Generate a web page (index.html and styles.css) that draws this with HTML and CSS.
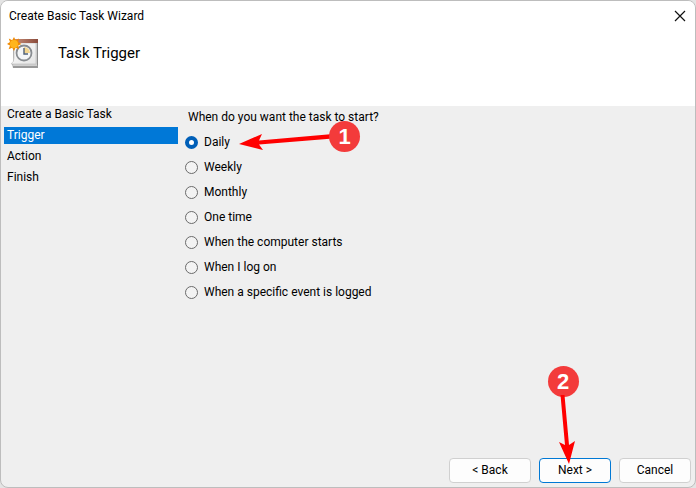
FILE: index.html
```html
<!DOCTYPE html>
<html lang="en">
<head>
    <meta charset="UTF-8">
    <meta name="viewport" content="width=device-width, initial-scale=1.0">
    <title>Create Basic Task Wizard</title>
    <link rel="stylesheet" href="styles.css">
</head>
<body>
    <form class="wizard">
        <header class="header">
            <div class="titlebar">
                <span>Create Basic Task Wizard</span>
                <button type="button" class="close-btn" aria-label="Close">
                    <svg width="12" height="12" viewBox="0 0 12 12"><path d="M1 1L11 11M11 1L1 11" stroke="#111" stroke-width="1.2" fill="none"/></svg>
                </button>
            </div>
            <div class="page-title">
                <svg width="32" height="32" viewBox="0 0 32 32">
                    <defs>
                        <linearGradient id="page" x1="0" y1="0" x2="1" y2="1">
                            <stop offset="0" stop-color="#ffffff"/>
                            <stop offset="1" stop-color="#e4e4e4"/>
                        </linearGradient>
                        <linearGradient id="bar" x1="0" y1="0" x2="1" y2="0">
                            <stop offset="0" stop-color="#c98f78"/>
                            <stop offset="1" stop-color="#8a4b3c"/>
                        </linearGradient>
                    </defs>
                    <path d="M6 4H31V31H6Z" fill="#8b8b8b"/>
                    <path d="M5 26L31 28V31H6Z" fill="#999"/>
                    <path d="M7 3H30V29H6Z" fill="#d0d0d0"/>
                    <path d="M7 6H29V27H4Q7 25 7 21Z" fill="url(#page)" stroke="#bbb" stroke-width="0.6"/>
                    <path d="M7 2H31V6H7Z" fill="url(#bar)"/>
                    <circle cx="17" cy="16" r="7.5" fill="#f4f6f8" stroke="#888c90" stroke-width="1.8"/>
                    <path d="M17 16V10A6 6 0 0 1 23 16Z" fill="#f3d58e"/>
                    <path d="M17 11V17H21" fill="none" stroke="#4e6075" stroke-width="1.4"/>
                    <path d="M7 0L8.6 3.2L12 1.5L11.2 5L14.5 7L11.2 8.6L12 12.3L8.6 10.8L7 14L5.2 10.8L1.6 12.3L3 8.6L0 7L3 5L1.8 1.5L5.2 3.2Z" fill="#f08a00"/>
                    <circle cx="7" cy="7" r="4" fill="#ffb51c"/>
                </svg>
                <h1>Task Trigger</h1>
            </div>
        </header>

        <div class="main">
            <ul class="steps">
                <li>Create a Basic Task</li>
                <li class="active">Trigger</li>
                <li>Action</li>
                <li>Finish</li>
            </ul>

            <fieldset class="options">
                <legend>When do you want the task to start?</legend>
                <div class="option">
                    <input type="radio" name="start" id="daily" checked>
                    <label for="daily">Daily</label>
                    <div class="callout callout-one">
                        <svg width="94" height="32" viewBox="0 0 94 32"><path d="M0 24L23 14L20 20.5L94 14V18.500L20 24.500L24 30Z" fill="#f00"/></svg>
                        <span class="badge">1</span>
                    </div>
                </div>
                <div class="option">
                    <input type="radio" name="start" id="weekly">
                    <label for="weekly">Weekly</label>
                </div>
                <div class="option">
                    <input type="radio" name="start" id="monthly">
                    <label for="monthly">Monthly</label>
                </div>
                <div class="option">
                    <input type="radio" name="start" id="once">
                    <label for="once">One time</label>
                </div>
                <div class="option">
                    <input type="radio" name="start" id="boot">
                    <label for="boot">When the computer starts</label>
                </div>
                <div class="option">
                    <input type="radio" name="start" id="logon">
                    <label for="logon">When I log on</label>
                </div>
                <div class="option">
                    <input type="radio" name="start" id="event">
                    <label for="event">When a specific event is logged</label>
                </div>
            </fieldset>
        </div>

        <footer class="footer">
            <button type="button" class="btn btn-back">&lt; Back</button>
            <div class="next">
                <button type="button" class="btn btn-primary">Next &gt;</button>
                <div class="callout callout-two">
                    <span class="badge">2</span>
                    <svg width="32" height="70" viewBox="0 0 32 70"><path d="M13.500 0H17.500L22 50L28 46L22 69L12 47L18 50Z" fill="#f00"/></svg>
                </div>
            </div>
            <button type="button" class="btn">Cancel</button>
        </footer>
    </form>
</body>
</html>
```

FILE: styles.css
```css
* {
    box-sizing: border-box;
}

body {
    margin: 0;
    font-family: Roboto, 'Open Sans', sans-serif;
    font-size: 12px;
    line-height: 17px;
    color: #000;
    background-color: #e4e4e4;
}

.wizard {
    display: flex;
    flex-direction: column;
    min-height: 100vh;
    background-color: #efefef;
    border: 1px solid #bdbdbd;
    border-radius: 8px;
    overflow: hidden;
}

.header {
    height: 105px;
    background-color: #fff;
}

.titlebar {
    display: flex;
    align-items: center;
    justify-content: space-between;
    height: 30px;
    padding: 0 9px 0 8px;
}

.close-btn {
    display: flex;
    padding: 0;
    border: none;
    background: none;
}

.page-title {
    display: flex;
    align-items: center;
    gap: 19px;
    padding: 6px;
}

.page-title h1 {
    margin: 0;
    font-size: 15px;
    font-weight: 400;
    line-height: 18px;
}

.main {
    display: flex;
    flex: 1;
}

.steps {
    display: flex;
    flex-direction: column;
    gap: 4px;
    width: 177px;
    margin: 0;
    padding: 0 0 0 3px;
    list-style: none;
}

.steps li {
    padding-left: 3px;
}

.steps .active {
    color: #fff;
    background-color: #0078d7;
}

.options {
    margin: 0;
    padding: 3px 7px;
    border: none;
}

.options legend {
    float: left;
    width: 100%;
    margin-bottom: 4px;
    padding: 0 3px;
}

.option {
    display: flex;
    align-items: center;
    gap: 6px;
    clear: both;
    position: relative;
    height: 25px;
}

.option input {
    appearance: none;
    width: 13px;
    height: 13px;
    margin: 0;
    border: 1px solid #6b6b6b;
    border-radius: 50%;
    background-color: #f3f3f3;
}

.option input:checked {
    border: 4px solid #005fb8;
    background-color: #fff;
}

.callout {
    display: flex;
    position: absolute;
    pointer-events: none;
}

.callout-one {
    top: -10px;
    left: 54px;
    align-items: center;
}

.callout-two {
    flex-direction: column;
    align-items: center;
    bottom: 18px;
    left: 8px;
}

.badge {
    width: 31px;
    height: 31px;
    border-radius: 50%;
    background-color: #f33b3b;
    color: #fff;
    font-family: 'Liberation Sans', sans-serif;
    font-size: 22px;
    font-weight: 700;
    line-height: 31px;
    text-align: center;
}

.callout-one .badge {
    margin-left: -4px;
}

.callout-two svg {
    margin-top: -2px;
}

.footer {
    display: flex;
    justify-content: flex-end;
    gap: 8px;
    padding: 4px;
}

.next {
    position: relative;
}

.btn {
    width: 72px;
    height: 25px;
    padding: 0;
    border: 1px solid #d0d0d0;
    border-radius: 4px;
    background-color: #fdfdfd;
    color: #000;
    font: inherit;
}

.btn-back {
    width: 82px;
}

.btn-primary {
    border-color: #0078d4;
}
```
